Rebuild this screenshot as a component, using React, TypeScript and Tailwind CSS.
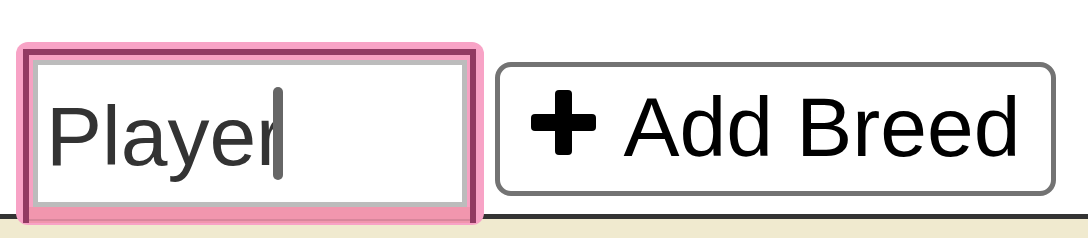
import React from 'react';

const PlusIcon = () => (
  <svg width="65" height="65" viewBox="0 0 65 65" className="shrink-0 mb-[5px]">
    <rect x="24" y="0" width="17" height="65" rx="4" fill="#000" />
    <rect x="0" y="24" width="65" height="17" rx="4" fill="#000" />
  </svg>
);

export default function App() {
  return (
    <div className="w-full h-[238px] bg-white flex flex-col overflow-hidden font-['Liberation_Sans',Arial,sans-serif]">
      <div className="h-[214px] flex items-start pl-[16px] pt-[42px] shrink-0">
        {/* highlighted breed input */}
        <div className="relative z-10 bg-[#f8a3c6] rounded-[12px] pl-[7px] pr-[8px] pt-[7px] pb-[2px]">
          <div className="border-[#923a62] border-l-[6px] border-r-[6px] border-t-[6px] bg-[#f7a1c2] pl-[4px] pr-[3px] pt-[5px]">
            <div className="relative w-[434px] h-[147px] border-[5px] border-[#bcbcbc] bg-white flex items-center pl-[8px] pt-[4px]">
              <span className="text-[84px] text-[#333] leading-none whitespace-nowrap">Player</span>
              <span className="inline-block w-[10px] h-[93px] rounded-full bg-[#666] -ml-[11px] -mt-[4px]" />
            </div>
            <div className="-ml-[4px] -mr-[3px] bg-[#f196ae] h-[12px]" />
            <div className="-ml-[4px] -mr-[3px] bg-[#d8869c] h-[2px]" />
            <div className="-ml-[4px] -mr-[3px] bg-[#f196ae] h-[2px]" />
          </div>
        </div>

        <button className="ml-[11px] mt-[20px] w-[561px] h-[134px] border-[5px] border-[#737373] rounded-[16px] bg-white flex items-center justify-center gap-[28px] pb-[8px]">
          <PlusIcon />
          <span className="text-[84px] text-black leading-none whitespace-nowrap mt-[4px]">Add Breed</span>
        </button>
      </div>
      <div className="h-[5px] bg-[#333] shrink-0" />
      <div className="flex-1 bg-[#f0eacf]" />
    </div>
  );
}
